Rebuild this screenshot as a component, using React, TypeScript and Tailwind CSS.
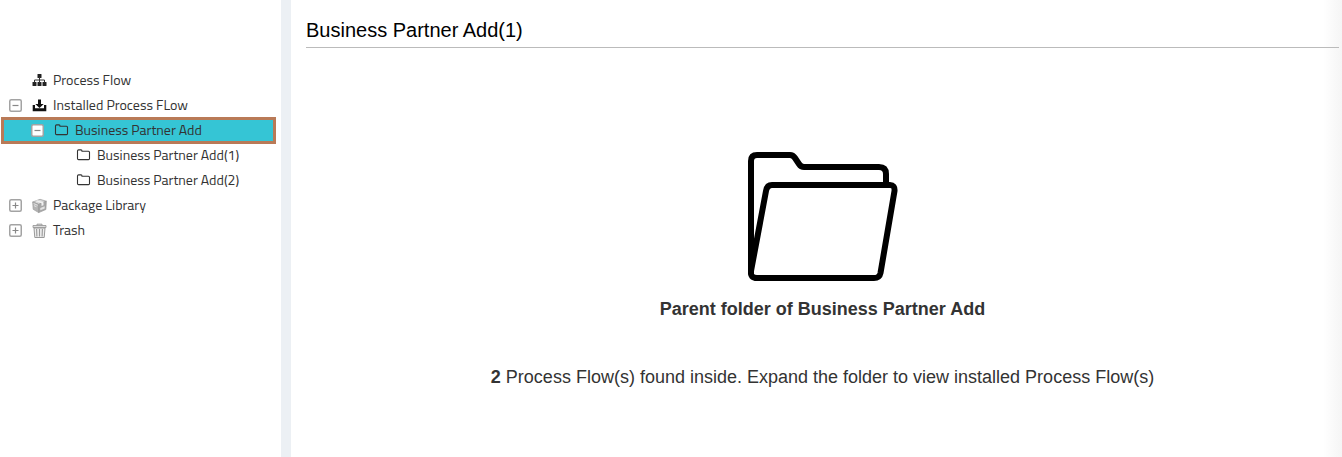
import type { ReactNode } from "react";

function Toggle({ open }: { open: boolean }) {
  return (
    <svg className="size-[13px] shrink-0" viewBox="0 0 13 13" fill="none">
      <rect x=".75" y=".75" width="11.5" height="11.5" rx="1.5" fill="#fff" stroke="#a3a3a3" strokeWidth="1.5" />
      <path d={open ? "M3.5 6.5h6" : "M3.5 6.5h6M6.5 3.5v6"} stroke="#888" strokeWidth="1.2" />
    </svg>
  );
}

function SitemapIcon() {
  return (
    <svg className="h-[14px] w-[15px]" viewBox="0 0 15 14" fill="none">
      <rect x="5.5" y="1" width="4" height="4" rx=".6" fill="#222" />
      <rect x=".5" y="9" width="4" height="4" rx=".6" fill="#222" />
      <rect x="5.5" y="9" width="4" height="4" rx=".6" fill="#222" />
      <rect x="10.5" y="9" width="4" height="4" rx=".6" fill="#222" />
      <path d="M7.5 4v6M2.5 9.500V7h10v2.500" stroke="#333" />
    </svg>
  );
}

function InstallIcon() {
  return (
    <svg className="h-[14px] w-[15px]" viewBox="0 0 15 14">
      <path d="M6 1.500h3V6h2.700L7.500 10 3.300 6H6z" fill="#111" />
      <path d="M.7 7h2.300v3.300h9V7h2.300v6.200H.7z" fill="#111" />
    </svg>
  );
}

function SmallFolderIcon() {
  return (
    <svg className="h-[14px] w-[15px]" viewBox="0 0 15 14" fill="none">
      <path d="M1.500 3Q1.500 1.900 2.600 1.900H5Q6 1.900 6 3V3.300H12.500Q13.500 3.300 13.500 4.300V10.500Q13.500 11.600 12.500 11.600H2.600Q1.500 11.600 1.500 10.500Z" stroke="#333" strokeWidth="1.1" />
    </svg>
  );
}

function PackageIcon() {
  return (
    <svg className="mt-[2px] h-[16px] w-[15px]" viewBox="0 0 15 16" fill="none">
      <path d="M.7 4 8 1.300l6.300 1.900-7.600 3.200z" fill="#d8d8d8" stroke="#999" strokeWidth=".7" />
      <path d="M.7 4 6.700 6.400v8.200L1.200 11.300z" fill="#b4b4b4" stroke="#999" strokeWidth=".7" />
      <path d="m6.700 6.400 7.600-3.200-.4 8.300-7.200 3.100z" fill="#a6a6a6" stroke="#999" strokeWidth=".7" />
      <path d="m3.200 3 6.300 2.200v2.900l2-.9V4.300L5.200 2.300z" fill="#f0f0f0" />
      <path d="m1.700 5.600 4 1.700M1.900 7.600l2.600 1.200" stroke="#e6e6e6" strokeWidth=".9" />
      <path d="m8.300 10 4.400-1.800v2.200l-4.400 1.900z" fill="#e2e2e2" />
    </svg>
  );
}

function TrashIcon() {
  return (
    <svg className="mt-[2px] h-[16px] w-[15px]" viewBox="0 0 15 16" fill="none">
      <path d="M5 2.500V1.200h5v1.300" stroke="#999" />
      <path d="M1 2.500h13v2H1z" fill="#ddd" stroke="#909090" strokeWidth=".8" />
      <path d="m2 5 .8 9.500h9.400L13 5z" fill="#eee" stroke="#999" />
      <path d="m4.600 6 .3 7.500M7.500 6v7.500M10.400 6l-.3 7.500" stroke="#999" strokeWidth="1.100" />
    </svg>
  );
}

type RowProps = {
  label: string;
  icon: ReactNode;
  indent: string;
  open?: boolean;
  selected?: boolean;
};

function TreeRow({ label, icon, indent, open, selected }: RowProps) {
  return (
    <div
      className={`flex h-[25px] items-center ${indent} ${
        selected ? "outline-[3px] -outline-offset-2 outline-[#b97a57] bg-[#35c5d5]" : ""
      }`}
    >
      <span className="flex w-[23px] shrink-0 pb-px">{open !== undefined && <Toggle open={open} />}</span>
      <span className="flex w-[21px] shrink-0 items-center pb-px">{icon}</span>
      <span className="pb-[2px] text-[14px] leading-[23px] whitespace-nowrap text-[#333]">{label}</span>
    </div>
  );
}

function LargeFolder() {
  return (
    <svg className="h-[130px] w-[150px]" viewBox="0 0 150 130" fill="none" stroke="#000" strokeWidth="6" strokeLinejoin="round">
      <path d="M3 122V9Q3 3 9 3H42Q45 3 47 6L51 12Q53 15 56 15H131Q138 15 138 22V33" />
      <path d="M24 33H142Q147 33 146.500 39L132.500 121Q131.500 126 126 126H9Q2 126 3 119L18 39Q19 33 24 33Z" />
    </svg>
  );
}

export default function App() {
  return (
    <div className="flex h-[457px] w-[1342px] overflow-hidden bg-white font-['Liberation_Sans',Arial,sans-serif]">
      <aside className="w-[281px] shrink-0 pt-[68px] pr-[6px] pl-[2px] font-['Titillium_Web',Roboto,sans-serif]">
        <TreeRow label="Process Flow" icon={<SitemapIcon />} indent="pl-[7px]" />
        <TreeRow label="Installed Process FLow" icon={<InstallIcon />} indent="pl-[7px]" open />
        <TreeRow label="Business Partner Add" icon={<SmallFolderIcon />} indent="pl-[29px]" open selected />
        <TreeRow label="Business Partner Add(1)" icon={<SmallFolderIcon />} indent="pl-[51px]" />
        <TreeRow label="Business Partner Add(2)" icon={<SmallFolderIcon />} indent="pl-[51px]" />
        <TreeRow label="Package Library" icon={<PackageIcon />} indent="pl-[7px]" open={false} />
        <TreeRow label="Trash" icon={<TrashIcon />} indent="pl-[7px]" open={false} />
      </aside>
      <div className="w-[10px] shrink-0 bg-[#ecf0f4]" />
      <main className="flex-1 bg-[linear-gradient(to_right,#fff_1032px,#f5f5f5)] pr-[3px] pl-[15px]">
        <h1 className="h-12 border-b border-[#bbb] pt-[15px] text-[20px] leading-[30px] text-black">Business Partner Add(1)</h1>
        <section className="flex flex-col items-center pt-[104px] text-[18px] text-[#333]">
          <LargeFolder />
          <h2 className="mt-[14px] leading-[26px] font-bold">Parent folder of Business Partner Add</h2>
          <p className="mt-[42px] leading-[26px]">
            <b>2</b> Process Flow(s) found inside. Expand the folder to view installed Process Flow(s)
          </p>
        </section>
      </main>
    </div>
  );
}
